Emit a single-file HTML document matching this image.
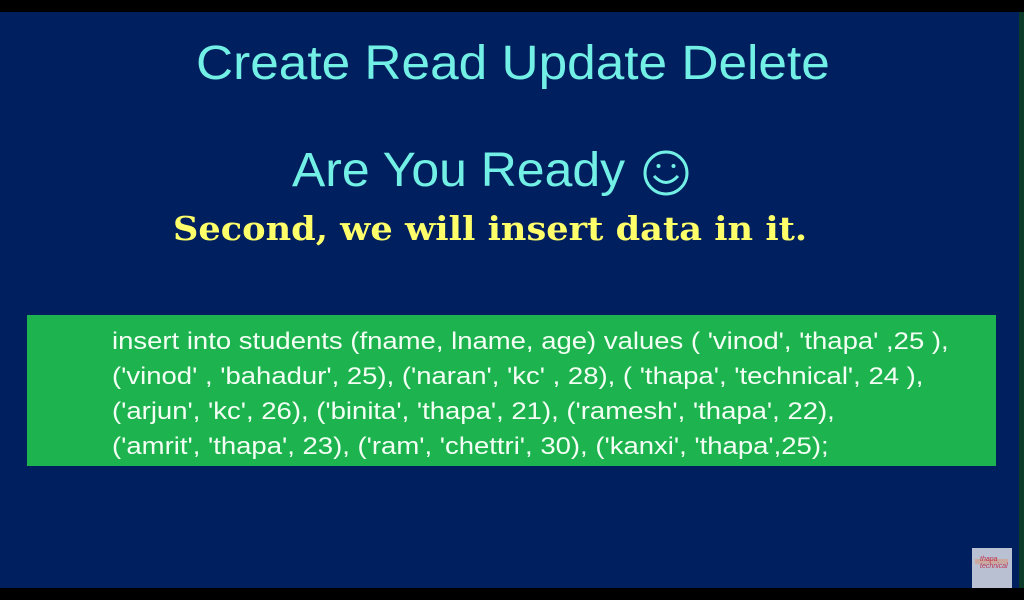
<!DOCTYPE html>
<html><head><meta charset="utf-8"><style>
html,body{margin:0;padding:0;}
body{width:1024px;height:600px;background:#001f5e;position:relative;overflow:hidden;font-family:"Liberation Sans",sans-serif;}
.t{position:absolute;white-space:nowrap;transform-origin:0 0;}
</style></head><body>
<div style="position:absolute;left:0;top:0;width:1024px;height:12px;background:#000"></div>
<div style="position:absolute;left:0;top:588px;width:1024px;height:12px;background:#000"></div>
<div style="position:absolute;left:1019px;top:12px;width:5px;height:576px;background:#0d3b2a"></div>
<div class="t" style="left:196px;top:36px;font-size:48px;color:#72f0e6;transform:scaleX(1.07)">Create Read Update Delete</div>
<div class="t" style="left:292px;top:143px;font-size:48px;color:#72f0e6;transform:scaleX(1.04)">Are You Ready</div>
<svg style="position:absolute;left:642px;top:149px" width="48" height="48" viewBox="0 0 48 48" fill="none" stroke="#72f0e6" stroke-width="3">
<circle cx="24" cy="24" r="21"/>
<circle cx="16.5" cy="17" r="2" fill="#72f0e6" stroke="none"/>
<circle cx="31.5" cy="17" r="2" fill="#72f0e6" stroke="none"/>
<path d="M12 27 Q24 40 36 27"/>
</svg>
<div class="t" style="left:173px;top:209px;font-family:'DejaVu Serif','Liberation Serif',serif;font-weight:bold;font-size:33px;color:#ffff6a;transform:scaleX(1.065)">Second, we will insert data in it.</div>
<div style="position:absolute;left:27px;top:315px;width:969px;height:151px;background:#1db450"></div>
<div class="t" style="left:112px;top:324px;font-size:24px;line-height:35px;color:#f4fff4;transform:scaleX(1.145)">insert into students (fname, lname, age) values ( 'vinod', 'thapa' ,25 ),<br>('vinod' , 'bahadur', 25), ('naran', 'kc' , 28), ( 'thapa', 'technical', 24 ),<br>('arjun', 'kc', 26), ('binita', 'thapa', 21), ('ramesh', 'thapa', 22),<br>('amrit', 'thapa', 23), ('ram', 'chettri', 30), ('kanxi', 'thapa',25);</div>
<div style="position:absolute;left:972px;top:548px;width:40px;height:40px;background:#b8c0d2"></div>
<div style="position:absolute;left:975px;top:559px;width:33px;height:5px;background:#c9a9a0"></div>
<div class="t" style="left:980px;top:556px;font-size:7px;color:#c0304a;font-style:italic">thapa<br>technical</div>
</body></html>
